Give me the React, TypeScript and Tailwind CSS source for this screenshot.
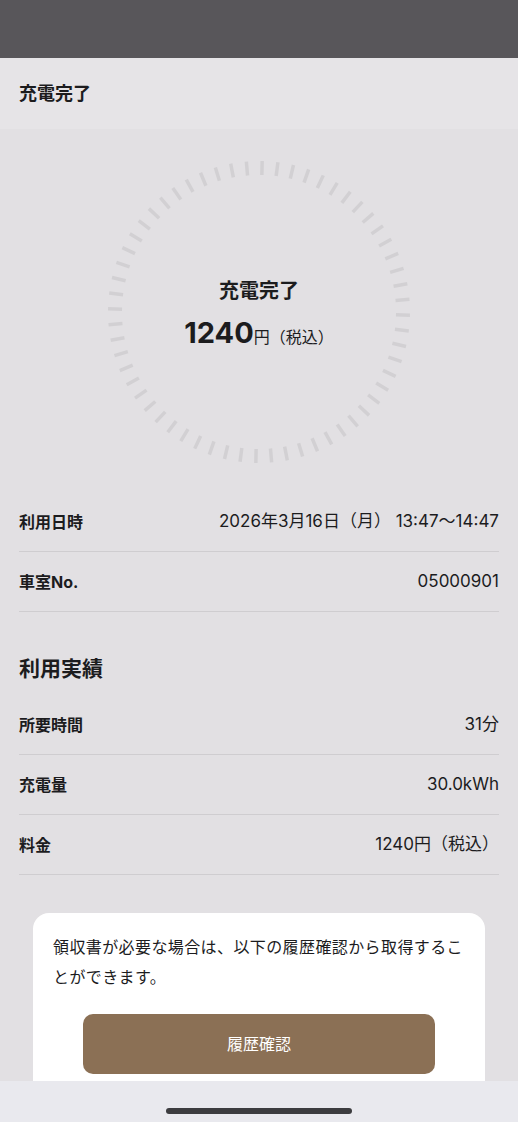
import React from "react";

const font = { fontFamily: 'Inter, "Noto Sans CJK JP", "Noto Sans", sans-serif' };

function TickRing() {
  const ticks = Array.from({ length: 60 }, (_, i) => i * 6 + 1.2);
  return (
    <svg width="304" height="304" viewBox="0 0 304 304" className="absolute inset-0">
      {ticks.map((deg) => {
        const a = (deg * Math.PI) / 180;
        const x1 = 152 + Math.sin(a) * 137;
        const y1 = 152 - Math.cos(a) * 137;
        const x2 = 152 + Math.sin(a) * 151;
        const y2 = 152 - Math.cos(a) * 151;
        return (
          <line
            key={deg}
            x1={x1}
            y1={y1}
            x2={x2}
            y2={y2}
            stroke="#d2d0d3"
            strokeWidth="3.5"
          />
        );
      })}
    </svg>
  );
}

function Row({ label, value }: { label: string; value: string }) {
  return (
    <div className="flex h-[60px] items-center justify-between border-b border-[#cfcdd0]">
      <span className="text-[16px] font-bold text-[#1c1c1e]">{label}</span>
      <span className="text-[17px] text-[#1c1c1e]">{value}</span>
    </div>
  );
}

export default function App() {
  return (
    <div className="flex h-[1122px] flex-col overflow-hidden bg-[#e2e0e3]" style={font}>
      <div className="h-[58px] shrink-0 bg-[#58565a]" />
      <header className="flex h-[71px] shrink-0 items-center bg-[#e6e4e7] px-[19px]">
        <h1 className="text-[18px] font-bold text-[#1c1c1e]">充電完了</h1>
      </header>

      <main className="flex-1 overflow-hidden">
        <div className="flex justify-center pt-[31px] pb-[28px]">
          <div className="relative flex h-[304px] w-[304px] flex-col items-center justify-center pt-[4px]">
            <TickRing />
            <p className="relative text-[20px] font-bold leading-[28px] text-[#1c1c1e]">充電完了</p>
            <p className="relative mt-[10px] flex items-baseline text-[#1c1c1e]">
              <span className="text-[29px] font-bold leading-[36px]">1240</span>
              <span className="text-[16px]">円</span>
              <span className="text-[16px]">（税込）</span>
            </p>
          </div>
        </div>

        <div className="px-[19px]">
          <Row label="利用日時" value="2026年3月16日（月） 13:47〜14:47" />
          <Row label="車室No." value="05000901" />

          <h2 className="mt-[43px] mb-[12px] text-[21px] font-bold leading-[28px] text-[#1c1c1e]">
            利用実績
          </h2>
          <Row label="所要時間" value="31分" />
          <Row label="充電量" value="30.0kWh" />
          <Row label="料金" value="1240円（税込）" />
        </div>

        <div className="mx-[33px] mt-[38px] rounded-[16px] bg-white px-[20px] pt-[19px] pb-[24px]">
          <p className="text-[16px] leading-[30px] tracking-[0.4px] text-[#1c1c1e]">
            領収書が必要な場合は、以下の履歴確認から取得することができます。
          </p>
          <div className="mt-[22px] flex justify-center">
            <button className="h-[60px] w-[352px] rounded-[10px] bg-[#8b7055] text-[16px] text-white">
              履歴確認
            </button>
          </div>
        </div>
      </main>

      <footer className="flex h-[41px] shrink-0 items-end justify-center bg-[#e9e9ee] pb-[8px]">
        <div className="h-[6px] w-[186px] rounded-full bg-[#3c3c3f]" />
      </footer>
    </div>
  );
}
